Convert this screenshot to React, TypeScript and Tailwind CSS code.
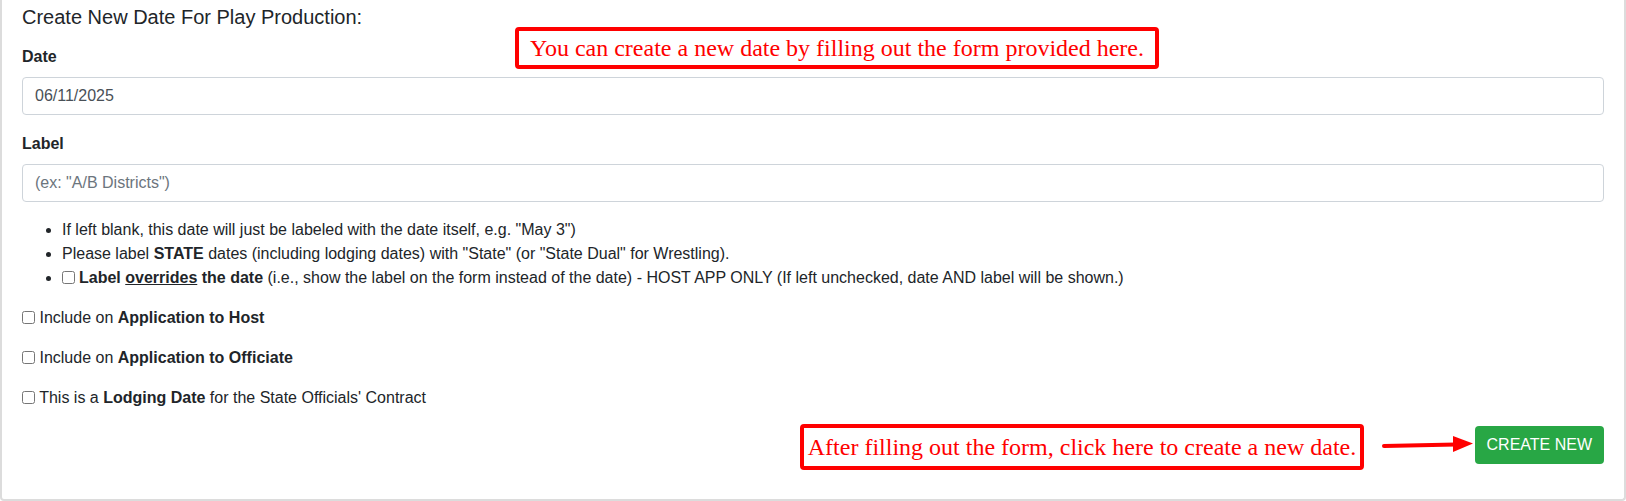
import React from 'react';

export default function App() {
  return (
    <div className="relative h-[501px] w-[1626px] overflow-hidden bg-white font-['Liberation_Sans',Arial,sans-serif] text-[16px] leading-6 text-[#212529]">
      {/* card, top edge cut off by the screenshot */}
      <div className="h-[501px] rounded-b border-x-2 border-b-2 border-[#dcdcdc] px-5 pt-[5px]">
        <h5 className="mb-4 text-[20px] leading-6">Create New Date For Play Production:</h5>

        <div className="mb-[17px]">
          <label className="mb-2 block font-bold">Date</label>
          <input
            type="text"
            defaultValue="06/11/2025"
            className="block h-[38px] w-full rounded border border-[#ced4da] px-3 text-[16px] text-[#495057] outline-none"
          />
        </div>

        <div className="mb-4">
          <label className="mb-2 block font-bold">Label</label>
          <input
            type="text"
            placeholder={'(ex: "A/B Districts")'}
            className="block h-[38px] w-full rounded border border-[#ced4da] px-3 text-[16px] text-[#495057] outline-none placeholder:text-[#6c757d]"
          />
        </div>

        <ul className="mb-4 list-disc pl-10">
          <li>If left blank, this date will just be labeled with the date itself, e.g. "May 3")</li>
          <li>
            Please label <b>STATE</b> dates (including lodging dates) with "State" (or "State Dual" for Wrestling).
          </li>
          <li>
            <input type="checkbox" className="mr-1 align-[-1px]" />
            <b>
              Label <u>overrides</u> the date
            </b>{' '}
            (i.e., show the label on the form instead of the date) - HOST APP ONLY (If left unchecked, date AND label will be shown.)
          </li>
        </ul>

        <div className="mb-4">
          <input type="checkbox" className="align-[-1px]" /> Include on <b>Application to Host</b>
        </div>
        <div className="mb-4">
          <input type="checkbox" className="align-[-1px]" /> Include on <b>Application to Officiate</b>
        </div>
        <div className="mb-4">
          <input type="checkbox" className="align-[-1px]" /> This is a <b>Lodging Date</b> for the State Officials' Contract
        </div>

        <div className="flex justify-end">
          <button className="h-[38px] rounded bg-[#28a745] px-3 text-[16px] text-white">CREATE NEW</button>
        </div>
      </div>

      {/* annotations */}
      <div className="absolute left-[515px] top-[27px] flex h-[42px] w-[644px] items-center justify-center rounded-sm border-4 border-[#ff0000] bg-white font-['Liberation_Serif',serif] text-[24px] text-[#ff0000]">
        You can create a new date by filling out the form provided here.
      </div>
      <div className="absolute left-[800px] top-[424px] flex h-[46px] w-[564px] items-center justify-center rounded-sm border-4 border-[#ff0000] bg-white font-['Liberation_Serif',serif] text-[24px] text-[#ff0000]">
        After filling out the form, click here to create a new date.
      </div>
      <svg className="absolute left-[1380px] top-[434px]" width="96" height="22" viewBox="0 0 96 22">
        <line x1="4" y1="12" x2="76" y2="10.5" stroke="#ff0000" strokeWidth="4" strokeLinecap="round" />
        <polygon points="73,2 93,9.5 73,18" fill="#ff0000" />
      </svg>
    </div>
  );
}
